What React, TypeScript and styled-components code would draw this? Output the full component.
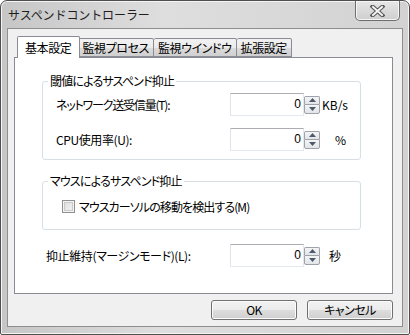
import styled, { createGlobalStyle } from "styled-components";

const GlobalStyle = createGlobalStyle`
  html, body {
    margin: 0;
    padding: 0;
    background: #ffffff;
  }
  body {
    font-family: "Noto Sans CJK JP", "Noto Sans", sans-serif;
    font-size: 12px;
    color: #000;
  }
  * {
    box-sizing: border-box;
  }
`;

const Window = styled.div`
  width: 410px;
  height: 335px;
  border: 1px solid #4f4f4f;
  border-radius: 7px 7px 2px 2px;
  background: linear-gradient(90deg, #c6c6c6 0%, #dedede 40%, #d2d2d2 100%);
  display: flex;
  flex-direction: column;
  padding: 0 6px 7px 6px;
  box-shadow: inset 0 0 0 1px #f4f4f4;
`;

const TitleBar = styled.div`
  height: 27px;
  display: flex;
  align-items: flex-start;
`;

const Title = styled.div`
  padding: 6px 0 0 1px;
  font-size: 12px;
  line-height: 16px;
  color: #1e1e1e;
  letter-spacing: -0.1px;
`;

const CloseButton = styled.button`
  margin-left: auto;
  margin-right: 3px;
  width: 45px;
  height: 20px;
  border: 1px solid #6d6d6d;
  border-top: none;
  border-radius: 0 0 5px 5px;
  background: linear-gradient(180deg, #e8e8e8 0%, #dadada 50%, #cfcfcf 100%);
  box-shadow: inset 0 0 0 1px #f6f6f6;
  display: flex;
  align-items: center;
  justify-content: center;
  padding: 0;
`;

const Client = styled.div`
  flex: 1;
  background: #f0f0f0;
  border: 1px solid #8e8e8e;
  display: flex;
  flex-direction: column;
  padding: 6px 9px 0 6px;
`;

const TabStrip = styled.div`
  display: flex;
  align-items: flex-end;
  height: 22px;
  padding-left: 5px;
  position: relative;
  z-index: 1;
`;

const Tab = styled.div<{ $active?: boolean }>`
  height: ${(p) => (p.$active ? "22px" : "19px")};
  margin: ${(p) => (p.$active ? "0 -2px -1px -2px" : "0")};
  padding: ${(p) => (p.$active ? "3px 8px 0 7px" : "1px 4px 0 4px")};
  border: 1px solid #898c95;
  border-bottom: ${(p) => (p.$active ? "none" : "1px solid #898c95")};
  border-left: ${(p) => (p.$active ? "1px solid #898c95" : "none")};
  background: ${(p) =>
    p.$active ? "#ffffff" : "linear-gradient(180deg, #f2f2f2 0%, #ebebeb 50%, #dcdcdc 51%, #cfcfcf 100%)"};
  border-radius: 2px 2px 0 0;
  line-height: 16px;
  font-feature-settings: "palt" 1;
  letter-spacing: -0.4px;
  position: relative;
  z-index: ${(p) => (p.$active ? 2 : 1)};
  &:first-child {
    border-left: 1px solid #898c95;
  }
`;

const Panel = styled.div`
  height: 237px;
  background: #ffffff;
  border: 1px solid #898c95;
  padding: 16px 31px 0 27px;
  display: flex;
  flex-direction: column;
`;

const Group = styled.fieldset<{ $gap?: number }>`
  margin: ${(p) => p.$gap ?? 0}px 0 0 0;
  border: 1px solid #d5dfe5;
  border-radius: 3px;
  padding: 0 0 0 13px;
`;

const Legend = styled.legend`
  margin-left: -8px;
  padding: 0 2px;
  line-height: 14px;
  font-feature-settings: "palt" 1;
  letter-spacing: -0.8px;
`;

const FieldGrid = styled.div`
  display: grid;
  grid-template-columns: 174px 90px auto;
  align-items: center;
  row-gap: 12px;
  padding: 5px 0 8px 0;
`;

const Label = styled.span<{ $tight?: boolean }>`
  font-feature-settings: "palt" 1;
  letter-spacing: ${(p) => (p.$tight ? "-1.2px" : "-0.4px")};
  white-space: nowrap;
`;

const Unit = styled.span<{ $indent: number }>`
  padding-left: ${(p) => p.$indent}px;
`;

const SpinBox = styled.div`
  width: 90px;
  height: 23px;
  display: flex;
  align-items: center;
`;

const Edit = styled.div`
  flex: 1;
  height: 23px;
  border: 1px solid #abadb3;
  border-color: #abadb3 #e3e9ef #e3e9ef #e2e3ea;
  text-align: right;
  padding-right: 2px;
  line-height: 21px;
  font-family: "Liberation Sans", sans-serif;
  font-size: 12px;
`;

const SpinButtons = styled.div`
  width: 16px;
  height: 18px;
  display: flex;
  flex-direction: column;
`;

const SpinButton = styled.div`
  flex: 1;
  border: 1px solid #9ea3ab;
  background: linear-gradient(180deg, #f5f5f5 0%, #e2e4e7 100%);
  display: flex;
  align-items: center;
  justify-content: center;
  &:first-child {
    border-bottom: none;
    border-radius: 2px 2px 0 0;
  }
  &:last-child {
    border-radius: 0 0 2px 2px;
  }
`;

const CheckRow = styled.label`
  display: flex;
  align-items: center;
  gap: 4px;
  padding: 10px 0 14px 6px;
  font-feature-settings: "palt" 1;
  letter-spacing: -0.9px;
`;

const CheckBox = styled.span`
  width: 13px;
  height: 13px;
  border: 1px solid #8e8f8f;
  background: linear-gradient(135deg, #dcdcdc 0%, #f4f4f4 100%);
  box-shadow: inset 0 0 0 1px #f4f4f4, inset 0 0 0 2px #c9c9c9;
`;

const MarginRow = styled.div`
  display: grid;
  grid-template-columns: 184px 90px auto;
  align-items: center;
  padding: 14px 0 0 4px;
`;

const Footer = styled.div`
  display: flex;
  justify-content: flex-end;
  gap: 10px;
  padding: 6px 0 0 0;
`;

const PushButton = styled.button`
  width: 86px;
  height: 20px;
  border: 1px solid #707070;
  border-radius: 3px;
  background: linear-gradient(180deg, #f2f2f2 0%, #ebebeb 50%, #dddddd 51%, #cfcfcf 100%);
  box-shadow: inset 0 0 0 1px #fcfcfc;
  font-family: "Noto Sans CJK JP", "Noto Sans", sans-serif;
  font-size: 12px;
  line-height: 16px;
  color: #000;
  padding: 0;
  font-feature-settings: "palt" 1;
  letter-spacing: -0.5px;
`;

const Arrow = ({ up }: { up?: boolean }) => (
  <svg width="7" height="4" viewBox="0 0 7 4">
    <path d={up ? "M0 4 L3.5 0 L7 4 Z" : "M0 0 L3.5 4 L7 0 Z"} fill="#4d5a6b" />
  </svg>
);

const Spinner = ({ value }: { value: string }) => (
  <SpinBox>
    <Edit>{value}</Edit>
    <SpinButtons>
      <SpinButton>
        <Arrow up />
      </SpinButton>
      <SpinButton>
        <Arrow />
      </SpinButton>
    </SpinButtons>
  </SpinBox>
);

const CloseGlyph = () => (
  <svg width="15" height="12" viewBox="0 0 15 12">
    <path d="M2.5 1.5 L12.5 10.5 M12.5 1.5 L2.5 10.5" stroke="#545454" strokeWidth="4" strokeLinecap="square" />
    <path d="M3 2 L12 10 M12 2 L3 10" stroke="#f4f4f4" strokeWidth="2" strokeLinecap="square" />
  </svg>
);

export default function App() {
  return (
    <>
      <GlobalStyle />
      <Window>
        <TitleBar>
          <Title>サスペンドコントローラー</Title>
          <CloseButton aria-label="閉じる">
            <CloseGlyph />
          </CloseButton>
        </TitleBar>
        <Client>
          <TabStrip>
            <Tab $active>基本設定</Tab>
            <Tab>監視プロセス</Tab>
            <Tab>監視ウインドウ</Tab>
            <Tab>拡張設定</Tab>
          </TabStrip>
          <Panel>
            <Group>
              <Legend>閾値によるサスペンド抑止</Legend>
              <FieldGrid>
                <Label $tight>ネットワーク送受信量(T):</Label>
                <Spinner value="0" />
                <Unit $indent={2}>KB/s</Unit>
                <Label>CPU使用率(U):</Label>
                <Spinner value="0" />
                <Unit $indent={15}>%</Unit>
              </FieldGrid>
            </Group>
            <Group $gap={14}>
              <Legend>マウスによるサスペンド抑止</Legend>
              <CheckRow>
                <CheckBox />
                マウスカーソルの移動を検出する(M)
              </CheckRow>
            </Group>
            <MarginRow>
              <Label>抑止維持(マージンモード)(L):</Label>
              <Spinner value="0" />
              <Unit $indent={9}>秒</Unit>
            </MarginRow>
          </Panel>
          <Footer>
            <PushButton>OK</PushButton>
            <PushButton>キャンセル</PushButton>
          </Footer>
        </Client>
      </Window>
    </>
  );
}
